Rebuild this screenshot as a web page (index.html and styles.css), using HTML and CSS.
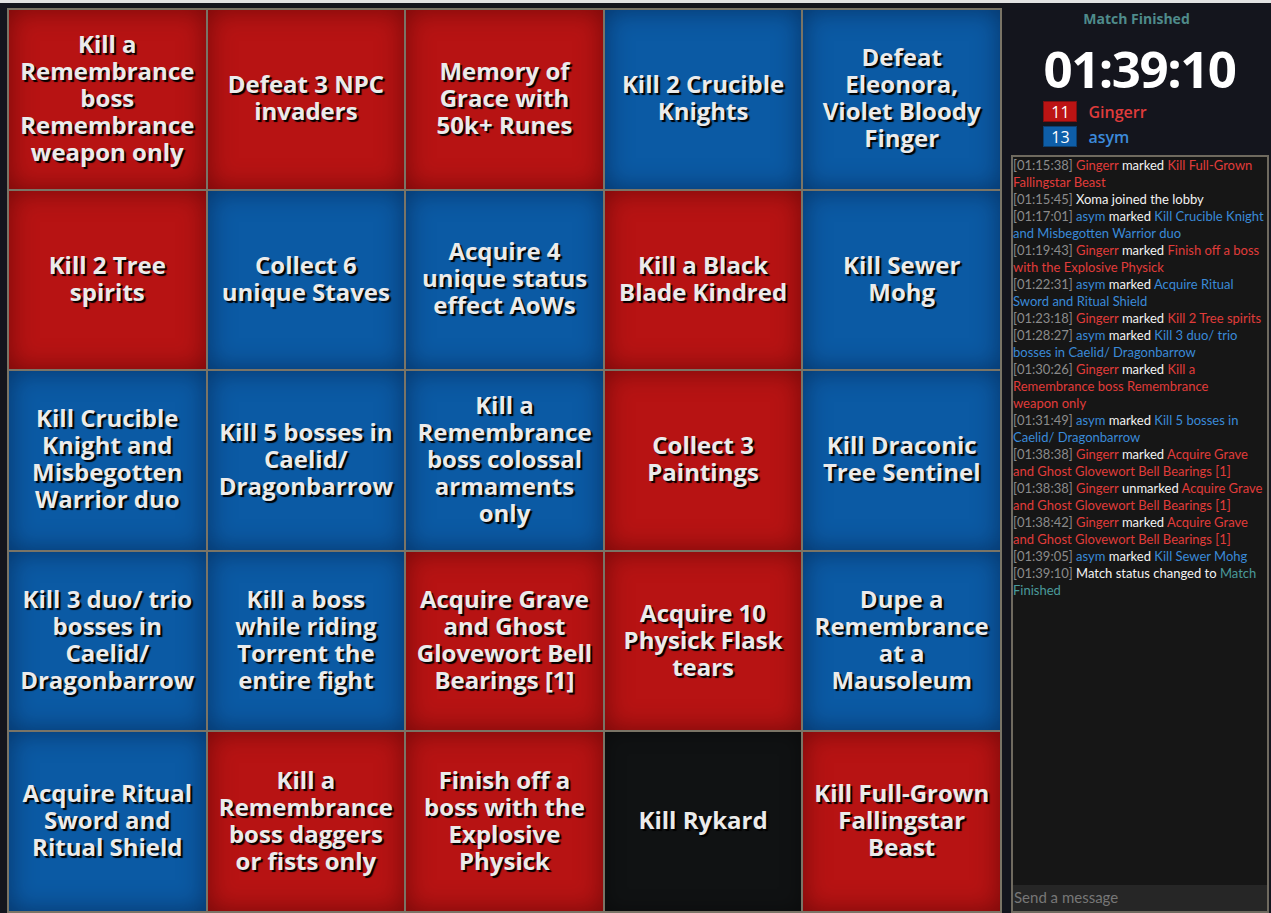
FILE: index.html
```html
<!DOCTYPE html>
<html>
<head>
<meta charset="utf-8">
<title>Bingo Board</title>
<link rel="stylesheet" href="styles.css">
</head>
<body>
<div class="topbar"></div>
<div class="main">
  <div class="board-wrap">
    <div class="board">
      <div class="cell red">Kill a<br>Remembrance<br>boss<br>Remembrance<br>weapon only</div>
      <div class="cell red">Defeat 3 NPC<br>invaders</div>
      <div class="cell red">Memory of<br>Grace with<br>50k+ Runes</div>
      <div class="cell blue">Kill 2 Crucible<br>Knights</div>
      <div class="cell blue">Defeat<br>Eleonora,<br>Violet Bloody<br>Finger</div>

      <div class="cell red">Kill 2 Tree<br>spirits</div>
      <div class="cell blue">Collect 6<br>unique Staves</div>
      <div class="cell blue">Acquire 4<br>unique status<br>effect AoWs</div>
      <div class="cell red">Kill a Black<br>Blade Kindred</div>
      <div class="cell blue">Kill Sewer<br>Mohg</div>

      <div class="cell blue">Kill Crucible<br>Knight and<br>Misbegotten<br>Warrior duo</div>
      <div class="cell blue">Kill 5 bosses in<br>Caelid/<br>Dragonbarrow</div>
      <div class="cell blue">Kill a<br>Remembrance<br>boss colossal<br>armaments<br>only</div>
      <div class="cell red">Collect 3<br>Paintings</div>
      <div class="cell blue">Kill Draconic<br>Tree Sentinel</div>

      <div class="cell blue">Kill 3 duo/ trio<br>bosses in<br>Caelid/<br>Dragonbarrow</div>
      <div class="cell blue">Kill a boss<br>while riding<br>Torrent the<br>entire fight</div>
      <div class="cell red">Acquire Grave<br>and Ghost<br>Glovewort Bell<br>Bearings [1]</div>
      <div class="cell red">Acquire 10<br>Physick Flask<br>tears</div>
      <div class="cell blue">Dupe a<br>Remembrance<br>at a<br>Mausoleum</div>

      <div class="cell blue">Acquire Ritual<br>Sword and<br>Ritual Shield</div>
      <div class="cell red">Kill a<br>Remembrance<br>boss daggers<br>or fists only</div>
      <div class="cell red">Finish off a<br>boss with the<br>Explosive<br>Physick</div>
      <div class="cell black">Kill Rykard</div>
      <div class="cell red">Kill Full-Grown<br>Fallingstar<br>Beast</div>
    </div>
  </div>

  <div class="panel">
    <div class="status">Match Finished</div>
    <div class="head">
      <div class="timer">01:39:10</div>
      <div class="score-row"><span class="badge badge-red">11</span><span class="pname pred">Gingerr</span></div>
      <div class="score-row"><span class="badge badge-blue">13</span><span class="pname pblue">asym</span></div>
    </div>
    <div class="chat">
      <div class="log">
        <p class="msg"><span class="ts">[01:15:38]</span> <span class="r">Gingerr</span> <span class="w">marked</span> <span class="r">Kill Full-Grown Fallingstar Beast</span></p>
        <p class="msg"><span class="ts">[01:15:45]</span> <span class="w">Xoma joined the lobby</span></p>
        <p class="msg"><span class="ts">[01:17:01]</span> <span class="b">asym</span> <span class="w">marked</span> <span class="b">Kill Crucible Knight and Misbegotten Warrior duo</span></p>
        <p class="msg"><span class="ts">[01:19:43]</span> <span class="r">Gingerr</span> <span class="w">marked</span> <span class="r">Finish off a boss with the Explosive Physick</span></p>
        <p class="msg"><span class="ts">[01:22:31]</span> <span class="b">asym</span> <span class="w">marked</span> <span class="b">Acquire Ritual Sword and Ritual Shield</span></p>
        <p class="msg"><span class="ts">[01:23:18]</span> <span class="r">Gingerr</span> <span class="w">marked</span> <span class="r">Kill 2 Tree spirits</span></p>
        <p class="msg"><span class="ts">[01:28:27]</span> <span class="b">asym</span> <span class="w">marked</span> <span class="b">Kill 3 duo/ trio bosses in Caelid/ Dragonbarrow</span></p>
        <p class="msg"><span class="ts">[01:30:26]</span> <span class="r">Gingerr</span> <span class="w">marked</span> <span class="r">Kill a Remembrance boss Remembrance<br>weapon only</span></p>
        <p class="msg"><span class="ts">[01:31:49]</span> <span class="b">asym</span> <span class="w">marked</span> <span class="b">Kill 5 bosses in Caelid/ Dragonbarrow</span></p>
        <p class="msg"><span class="ts">[01:38:38]</span> <span class="r">Gingerr</span> <span class="w">marked</span> <span class="r">Acquire Grave and Ghost Glovewort Bell Bearings [1]</span></p>
        <p class="msg"><span class="ts">[01:38:38]</span> <span class="r">Gingerr</span> <span class="w">unmarked</span> <span class="r">Acquire Grave and Ghost Glovewort Bell Bearings [1]</span></p>
        <p class="msg"><span class="ts">[01:38:42]</span> <span class="r">Gingerr</span> <span class="w">marked</span> <span class="r">Acquire Grave and Ghost Glovewort Bell Bearings [1]</span></p>
        <p class="msg"><span class="ts">[01:39:05]</span> <span class="b">asym</span> <span class="w">marked</span> <span class="b">Kill Sewer Mohg</span></p>
        <p class="msg"><span class="ts">[01:39:10]</span> <span class="w">Match status changed to</span> <span class="t">Match Finished</span></p>
      </div>
      <div class="input">Send a message</div>
    </div>
  </div>
</div>
</body>
</html>
```
FILE: styles.css
```css
html, body {
  margin: 0;
  padding: 0;
}
body {
  background: #14151d;
  width: 1271px;
  height: 913px;
  overflow: hidden;
  font-family: "Open Sans", "Noto Sans", sans-serif;
}
.topbar {
  height: 3px;
  background: #e2e2e2;
}
.main {
  display: flex;
  height: 910px;
}
.board-wrap {
  padding: 5px 0 0 7px;
}
.board {
  box-sizing: border-box;
  width: 995px;
  height: 905px;
  display: grid;
  grid-template-columns: repeat(5, 1fr);
  grid-template-rows: repeat(5, 1fr);
  gap: 2px;
  padding: 2px;
  background: #7a7466;
}
.cell {
  display: flex;
  align-items: center;
  justify-content: center;
  text-align: center;
  padding: 2px 4px 6px;
  font-weight: 700;
  font-size: 24px;
  line-height: 27px;
  color: #ebebeb;
  text-shadow: 2px 2px 1px #000;
  white-space: nowrap;
}
.red {
  background: #b71313;
  box-shadow: inset 0 0 26px rgba(60, 0, 0, 0.55);
}
.blue {
  background: #0b5aa4;
  box-shadow: inset 0 0 26px rgba(0, 15, 45, 0.5);
}
.black {
  background: #101213;
  box-shadow: inset 0 0 20px rgba(0, 0, 0, 0.4);
}
.panel {
  width: 269px;
  display: flex;
  flex-direction: column;
}
.status {
  text-align: center;
  margin-top: 7px;
  font-size: 14px;
  line-height: 18px;
  font-weight: 700;
  color: #4f8b8b;
}
.head {
  align-self: center;
  display: flex;
  flex-direction: column;
  gap: 4px;
  margin-left: 6px;
}
.timer {
  font-size: 51px;
  font-weight: 700;
  line-height: 52px;
  color: #ffffff;
  margin-top: 14px;
  margin-bottom: 3px;
  letter-spacing: -1.5px;
}
.score-row {
  display: flex;
  align-items: center;
  gap: 11px;
  height: 21px;
}
.badge {
  box-sizing: border-box;
  width: 34px;
  height: 21px;
  display: flex;
  align-items: center;
  justify-content: center;
  font-size: 16px;
  color: #fff;
}
.badge-red {
  background: #bc1414;
  border: 1px solid #7c1010;
}
.badge-blue {
  background: #0e5ea8;
  border: 1px solid #0b3f70;
}
.pname {
  font-size: 16px;
  font-weight: 600;
}
.pred { color: #df3b3b; }
.pblue { color: #3c8ada; }
.chat {
  flex: 1;
  margin: 8px 2px 0 9px;
  border: 2px solid #6f6a5f;
  background: #161616;
  display: flex;
  flex-direction: column;
}
.log {
  flex: 1;
  padding: 0;
  font-family: Lato, "Open Sans", sans-serif;
  font-size: 13px;
  line-height: 17px;
}
.msg {
  margin: 0;
}
.ts { color: #8b8b8b; }
.r { color: #e03c3a; }
.b { color: #3a8ad8; }
.w { color: #f2f2f2; }
.t { color: #4a9a9a; }
.input {
  height: 26px;
  background: #262626;
  color: #777;
  font-family: Lato, "Open Sans", sans-serif;
  font-size: 15px;
  line-height: 24px;
  padding-left: 1px;
}
```
